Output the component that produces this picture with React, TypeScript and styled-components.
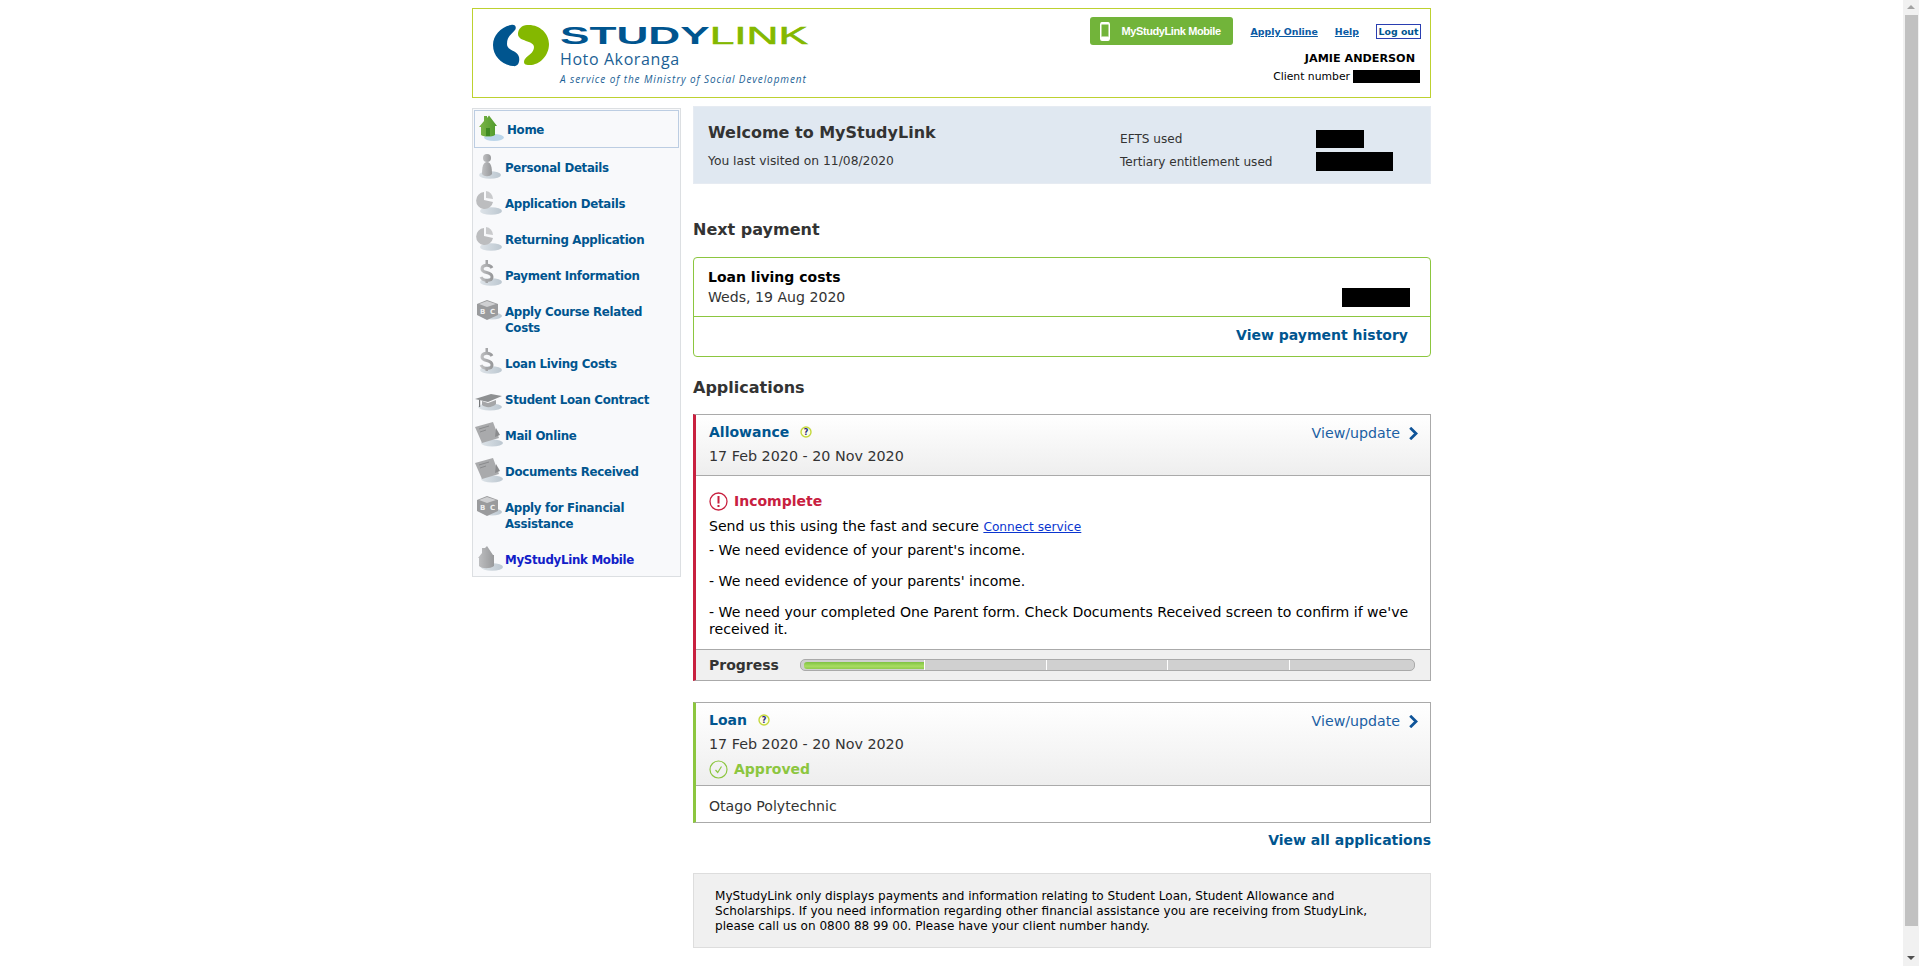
import React from "react";
import styled, { createGlobalStyle } from "styled-components";

const GlobalStyle = createGlobalStyle`
  html, body {
    margin: 0;
    height: 100%;
    overflow: hidden;
  }
  body {
    background: #fff;
    font-family: "DejaVu Sans", Verdana, sans-serif;
    color: #333;
  }
`;

const Viewport = styled.div`
  display: flex;
  height: 966px;
  overflow: hidden;
`;
const PageArea = styled.div`
  flex: 1;
  min-width: 0;
  overflow: hidden;
`;
const Page = styled.div`
  width: 959px;
  margin: 0 auto;
  padding: 8px 0 36px;
`;

/* window scrollbar */
const ScrollTrack = styled.div`
  flex: 0 0 16px;
  background: #f1f1f1;
  display: flex;
  flex-direction: column;
  align-items: center;
  padding: 5px 0 6px;
  box-sizing: border-box;
`;
const ArrowUp = styled.div`
  border-left: 4px solid transparent;
  border-right: 4px solid transparent;
  border-bottom: 4px solid #a3a3a3;
`;
const ArrowDown = styled.div`
  border-left: 4px solid transparent;
  border-right: 4px solid transparent;
  border-top: 4px solid #505050;
`;
const ScrollThumb = styled.div`
  width: 13px;
  height: 911px;
  margin: 6px 0 30px 1px;
  background: #c1c1c1;
`;

/* header */
const Header = styled.header`
  height: 90px;
  box-sizing: border-box;
  border: 1px solid #bdd130;
  display: flex;
  justify-content: space-between;
  background: #fff;
`;
const Brand = styled.div`
  display: flex;
  padding: 15px 0 0 20px;
`;
const BrandText = styled.div`
  margin-left: 10px;
  display: flex;
  flex-direction: column;
`;
const Wordmark = styled.div`
  font-family: "Liberation Sans", Arial, sans-serif;
  font-weight: 700;
  font-size: 23px;
  line-height: 20px;
  height: 20px;
  margin-top: 2px;
  color: #00558f;
  transform: scaleX(1.92);
  transform-origin: left center;
  white-space: nowrap;
`;
const WordmarkGreen = styled.span`
  color: #84b800;
  font-weight: 400;
  -webkit-text-stroke: 0.5px #84b800;
`;
const Subtitle = styled.div`
  font-family: "Open Sans", sans-serif;
  font-size: 16px;
  line-height: 20px;
  margin-top: 3px;
  letter-spacing: 0.6px;
  color: #1c5f95;
`;
const Tagline = styled.div`
  font-family: "Open Sans", sans-serif;
  font-style: italic;
  font-size: 10px;
  line-height: 14px;
  margin-top: 3px;
  letter-spacing: 0.9px;
  color: #1c5f95;
`;
const Account = styled.div`
  display: flex;
  flex-direction: column;
  align-items: flex-end;
  padding: 8px 9px 0 0;
`;
const AccountLinks = styled.div`
  display: flex;
  align-items: center;
`;
const MobileButton = styled.a`
  width: 143px;
  height: 28px;
  box-sizing: border-box;
  background: #72b43a;
  border-radius: 3px;
  display: flex;
  align-items: center;
  padding-left: 10px;
  gap: 11px;
  color: #fff;
  font-family: "Liberation Sans", Arial, sans-serif;
  font-weight: 700;
  font-size: 11px;
  letter-spacing: -0.4px;
  white-space: nowrap;
`;
const TopLink = styled.a`
  margin-left: 17px;
  font-size: 9.4px;
  font-weight: 700;
  color: #0b5aa3;
  text-decoration: underline;
`;
const LogoutLink = styled.a`
  margin-left: 17px;
  height: 15px;
  width: 45px;
  box-sizing: border-box;
  border: 1px solid #2a3eb1;
  font-size: 9.4px;
  line-height: 13px;
  font-weight: 700;
  text-align: center;
  color: #00558f;
`;
const UserName = styled.div`
  font-size: 11.2px;
  font-weight: 700;
  color: #000;
  line-height: 15px;
  margin: 6px 6px 0 0;
`;
const ClientRow = styled.div`
  display: flex;
  align-items: center;
  margin: 3px 1px 0 0;
  font-size: 10.8px;
  line-height: 15px;
  color: #000;
  gap: 3px;
`;
const Redacted = styled.span<{ $w: number; $h: number }>`
  display: inline-block;
  background: #000;
  width: ${(p) => p.$w}px;
  height: ${(p) => p.$h}px;
`;

/* columns */
const Columns = styled.div`
  display: flex;
  align-items: flex-start;
  margin-top: 8px;
`;
const Sidebar = styled.nav`
  width: 209px;
  box-sizing: border-box;
  margin-top: 2px;
  border: 1px solid #dcdfe2;
  background: #f8f9fb;
  padding: 1px 1px 0;
`;
const NavRow = styled.a<{ $active?: boolean; $color?: string }>`
  display: flex;
  align-items: flex-start;
  box-sizing: border-box;
  padding: ${(p) => (p.$active ? "11px 4px 9px" : "12px 4px 8px 3px")};
  border: ${(p) => (p.$active ? "1px solid #bccde2" : "0")};
  font-size: 11.8px;
  letter-spacing: -0.3px;
  font-weight: 700;
  line-height: 16px;
  color: ${(p) => p.$color || "#00558f"};
`;
const NavIconBox = styled.span`
  flex: 0 0 28px;
  height: 26px;
  margin: -7px 0 -3px;
`;
const Main = styled.main`
  width: 738px;
  margin-left: 12px;
`;
const Welcome = styled.section`
  height: 78px;
  box-sizing: border-box;
  background: #e0e8f1;
  border: 1px solid #e6ebf2;
  display: flex;
  padding: 16px 0 0 14px;
`;
const WelcomeLeft = styled.div`
  width: 412px;
`;
const WelcomeTitle = styled.h1`
  margin: 0;
  font-size: 16px;
  line-height: 20px;
  font-weight: 700;
  color: #333;
`;
const WelcomeNote = styled.div`
  margin-top: 11px;
  font-size: 12.3px;
  line-height: 15px;
  color: #333;
`;
const Stats = styled.div`
  display: grid;
  grid-template-columns: 196px auto;
  grid-auto-rows: 23px;
  align-items: center;
  font-size: 12.1px;
  color: #333;
  margin-top: 4px;
`;
const SectionTitle = styled.h2`
  margin: 0;
  font-size: 16px;
  line-height: 20px;
  font-weight: 700;
  color: #333;
`;
const PaymentCard = styled.section`
  margin-top: 17px;
  height: 100px;
  box-sizing: border-box;
  border: 1px solid #8cc63f;
  border-radius: 4px;
  display: flex;
  flex-direction: column;
`;
const PaymentTop = styled.div`
  height: 59px;
  box-sizing: border-box;
  border-bottom: 1px solid #8cc63f;
  padding: 10px 20px 0 14px;
  display: flex;
  justify-content: space-between;
`;
const PaymentName = styled.div`
  font-size: 14px;
  line-height: 18px;
  font-weight: 700;
  color: #000;
`;
const PaymentDate = styled.div`
  font-size: 14.1px;
  line-height: 18px;
  margin-top: 2px;
  color: #333;
`;
const BoldLink = styled.a`
  display: block;
  text-align: right;
  font-size: 14px;
  line-height: 18px;
  font-weight: 700;
  color: #00558f;
`;
const PaymentBottom = styled(BoldLink)`
  padding: 9px 22px 0 0;
`;
const AppCard = styled.section<{ $accent: string }>`
  border: 1px solid #aaa;
  border-left: 3px solid ${(p) => p.$accent};
`;
const AppHead = styled.div<{ $h: number }>`
  height: ${(p) => p.$h}px;
  box-sizing: border-box;
  padding: 8px 12px 0 13px;
  background: linear-gradient(#fff, #eee);
  border-bottom: 1px solid #aaa;
  display: flex;
  justify-content: space-between;
`;
const AppNameRow = styled.div`
  display: flex;
  align-items: center;
  gap: 11px;
  font-size: 14px;
  line-height: 18px;
  font-weight: 700;
  color: #00558f;
`;
const AppDates = styled.div`
  margin-top: 6px;
  font-size: 14.3px;
  line-height: 18px;
  color: #333;
`;
const ViewUpdate = styled.a`
  display: flex;
  align-items: center;
  gap: 9px;
  height: 20px;
  font-size: 14.2px;
  color: #1b5fa3;
`;
const StatusRow = styled.div<{ $color: string; $top?: number }>`
  display: flex;
  align-items: center;
  gap: 6px;
  margin-top: ${(p) => p.$top || 0}px;
  font-size: 14px;
  line-height: 20px;
  font-weight: 700;
  color: ${(p) => p.$color};
`;
const AppBody = styled.div`
  padding: 15px 14px 11px 13px;
  font-size: 14.1px;
  line-height: 17px;
  color: #000;
`;
const PlainBody = styled.div`
  padding: 12px 13px 7px;
  font-size: 14.1px;
  line-height: 17px;
  color: #333;
`;
const ConnectLink = styled.a`
  font-size: 12.2px;
  color: #0a35d0;
  text-decoration: underline;
`;
const BodyLine = styled.p<{ $top: number }>`
  margin: ${(p) => p.$top}px 0 0;
`;
const ProgressRow = styled.div`
  height: 31px;
  box-sizing: border-box;
  background: #f0f0f0;
  border-top: 1px solid #aaa;
  display: flex;
  align-items: center;
  padding: 0 15px 0 13px;
`;
const ProgressLabel = styled.span`
  flex: 0 0 91px;
  font-size: 14px;
  font-weight: 700;
  color: #333;
`;
const ProgressTrack = styled.div`
  flex: 1;
  height: 12px;
  box-sizing: border-box;
  background: #d0d0d0;
  border: 1px solid #aaa;
  border-radius: 5px;
  display: flex;
  padding: 0 4px 0 3px;
`;
const ProgressStep = styled.div`
  flex: 1;
  display: flex;
  align-items: center;
  border-right: 1px solid #fff;
  &:last-child {
    border-right: 0;
  }
`;
const ProgressFill = styled.div`
  width: 100%;
  height: 7px;
  border-radius: 3px 0 0 3px;
  background: linear-gradient(#7fc241, #a9dc62 60%, #8fcb4c);
`;
const Note = styled.div`
  margin-top: 24px;
  height: 75px;
  box-sizing: border-box;
  background: #f0f0f0;
  border: 1px solid #ddd;
  padding: 15px 40px 0 21px;
  font-size: 12.05px;
  line-height: 15px;
  color: #000;
`;
const Spaced = styled.div<{ $top: number }>`
  margin-top: ${(p) => p.$top}px;
`;

const Shadow = ({ cx = 14, cy = 22 }: { cx?: number; cy?: number }) => (
  <ellipse cx={cx} cy={cy} rx="11" ry="3.8" fill="url(#navShadow)" />
);

const icons: Record<string, React.ReactNode> = {
  home: (
    <>
      <ellipse cx="15" cy="22.5" rx="10" ry="3.5" fill="#bcd6ea" />
      <path d="M0 12 L5 6 L5 1 L8 1 L8 3 L10 0.5 L18 11 L16 11 L16 20 C13 22 5 22 2 20 L2 12 Z" fill="url(#navGreen)" />
      <rect x="7" y="13" width="4" height="8" fill="#3f8a22" />
    </>
  ),
  person: (
    <>
      <Shadow cx={13} />
      <circle cx="10" cy="5" r="4" fill="url(#navGrey)" />
      <path d="M5 21 C5 14 6 9 10 9 C14 9 15 14 15 21 C13 24 7 24 5 21 Z" fill="url(#navGrey)" />
    </>
  ),
  pie: (
    <>
      <Shadow />
      <path d="M7 3 L7 11 L16 13 A8.5 8.5 0 1 1 7 3 Z" fill="#bcbdbf" />
      <path d="M9 2 A8 8 0 0 1 16 10 L9 9 Z" fill="#c9cacc" />
    </>
  ),
  dollar: (
    <>
      <Shadow cy={21} />
      <path d="M15 7 C13 3 5 3.500 5 8 C5 13 15 10 15 16 C15 20.500 6 20.500 4 16" fill="none" stroke="url(#navGrey)" strokeWidth="3" />
      <rect x="8.500" y="-1" width="2.500" height="4" fill="#a5a6a8" />
      <rect x="8.500" y="18" width="2.500" height="4" fill="#a5a6a8" />
    </>
  ),
  cube: (
    <>
      <ellipse cx="15" cy="19" rx="10" ry="3.500" fill="url(#navShadow)" />
      <path d="M0 7 L10 3 L21 7 L21 18 L10 23 L0 18 Z" fill="#9a9b9d" />
      <path d="M2 7 L10 4 L19 7 L10 10 Z" fill="#cfd0d2" />
      <text x="3" y="17" fontSize="7" fontWeight="700" fill="#eee" fontFamily="DejaVu Sans">B</text>
      <text x="13" y="17" fontSize="7" fontWeight="700" fill="#eee" fontFamily="DejaVu Sans">C</text>
    </>
  ),
  cap: (
    <>
      <ellipse cx="13" cy="22" rx="12" ry="3.500" fill="url(#navShadow)" />
      <path d="M-2 14 L14 9 L25 11 L11 17 Z" fill="#8e9092" />
      <path d="M5 16 L11 18 L19 15 L19 19 C15 23 9 23 5 20 Z" fill="#a5a6a8" />
      <rect x="2" y="15" width="1.200" height="7" fill="#77797b" />
    </>
  ),
  doc: (
    <>
      <ellipse cx="15" cy="22" rx="11" ry="3.500" fill="url(#navShadow)" />
      <path d="M-2 6 L16 1 L22 17 L5 22 Z" fill="#a9aaac" />
      <path d="M2 8 L12 5 M3 11 L9 9" stroke="#8a8b8d" strokeWidth="1" />
      <path d="M19 7 L23 14 L18 16 Z" fill="#8a8b8d" />
    </>
  ),
  mobilehome: (
    <>
      <Shadow cx={15} />
      <path d="M1 13 L5 8 L5 3 L8 3 L10 1 L16 10 L17 10 L17 21 C13 24 5 24 2 21 L2 13 Z" fill="url(#navGrey)" />
    </>
  ),
};

const NavIcon = ({ name }: { name: string }) => (
  <NavIconBox>
    <svg width="28" height="26" viewBox="0 0 28 26" overflow="visible">
      <defs>
        <linearGradient id="navGrey" x1="0" y1="0" x2="1" y2="0">
          <stop offset="0" stopColor="#bfc0c2" />
          <stop offset="1" stopColor="#98999b" />
        </linearGradient>
        <linearGradient id="navGreen" x1="0" y1="0" x2="1" y2="0">
          <stop offset="0" stopColor="#7db648" />
          <stop offset="1" stopColor="#4f9a2c" />
        </linearGradient>
        <linearGradient id="navShadow" x1="0" y1="0" x2="1" y2="0">
          <stop offset="0" stopColor="#dde3e8" />
          <stop offset="1" stopColor="#bcc7d0" />
        </linearGradient>
      </defs>
      {icons[name]}
    </svg>
  </NavIconBox>
);

const navItems = [
  { icon: "home", label: "Home", active: true },
  { icon: "person", label: "Personal Details" },
  { icon: "pie", label: "Application Details" },
  { icon: "pie", label: "Returning Application" },
  { icon: "dollar", label: "Payment Information" },
  { icon: "cube", label: "Apply Course Related Costs" },
  { icon: "dollar", label: "Loan Living Costs" },
  { icon: "cap", label: "Student Loan Contract" },
  { icon: "doc", label: "Mail Online" },
  { icon: "doc", label: "Documents Received" },
  { icon: "cube", label: "Apply for Financial Assistance" },
  { icon: "mobilehome", label: "MyStudyLink Mobile", color: "#1120c8" },
];

const LogoMark = () => (
  <svg width="57" height="44" viewBox="0 0 57 44">
    <path d="M18 1 C22 0 24 3 22 6 C19 10 14 12 14 20 C14 27 24 26 26 33 C27 38 25 43 20 42 C10 41 0 33 0 21 C0 11 8 3 18 1 Z" fill="#00558f" />
    <path d="M34 1 C46 0 56 9 56 20 C56 32 46 42 35 41 C31 41 30 38 32 35 C35 31 41 29 41 23 C41 16 25 18 25 10 C25 5 29 1 34 1 Z" fill="#84b800" />
  </svg>
);

const PhoneIcon = () => (
  <svg width="10" height="19" viewBox="0 0 10 19">
    <rect x="0.75" y="0.75" width="8.5" height="17.5" rx="1.5" fill="none" stroke="#fff" strokeWidth="1.5" />
    <rect x="1" y="14.5" width="8" height="4" rx="1" fill="#fff" />
    <rect x="1" y="0.5" width="8" height="2" fill="#fff" />
  </svg>
);

const HelpIcon = () => (
  <svg width="12" height="12" viewBox="0 0 12 12">
    <circle cx="6" cy="6" r="5" fill="#fdfde8" stroke="#c4d83c" strokeWidth="1.4" />
    <text x="6" y="9" textAnchor="middle" fontSize="8" fontWeight="700" fill="#2a2a80" fontFamily="DejaVu Sans">?</text>
  </svg>
);

const Chevron = () => (
  <svg width="9" height="13" viewBox="0 0 9 13">
    <path d="M1.2 0.8 L7 6.5 L1.2 12.2" fill="none" stroke="#0f5499" strokeWidth="2.8" />
  </svg>
);

const AlertIcon = () => (
  <svg width="19" height="19" viewBox="0 0 19 19">
    <circle cx="9.5" cy="9.5" r="8.5" fill="none" stroke="#c8203f" strokeWidth="1.3" />
    <rect x="8.5" y="4" width="2" height="7.5" fill="#c8203f" />
    <rect x="8.5" y="13" width="2" height="2" fill="#c8203f" />
  </svg>
);

const CheckIcon = () => (
  <svg width="19" height="19" viewBox="0 0 19 19">
    <circle cx="9.5" cy="9.5" r="8.5" fill="none" stroke="#8cc63f" strokeWidth="1.2" />
    <path d="M6.5 10 L8.7 12.5 L12.5 6.5" fill="none" stroke="#8cc63f" strokeWidth="1.2" />
  </svg>
);

export default function App() {
  return (
    <Viewport>
      <GlobalStyle />
      <PageArea>
        <Page>
          <Header>
            <Brand>
              <LogoMark />
              <BrandText>
                <Wordmark>
                  STUDY<WordmarkGreen>LINK</WordmarkGreen>
                </Wordmark>
                <Subtitle>Hoto Akoranga</Subtitle>
                <Tagline>A service of the Ministry of Social Development</Tagline>
              </BrandText>
            </Brand>
            <Account>
              <AccountLinks>
                <MobileButton>
                  <PhoneIcon />
                  MyStudyLink Mobile
                </MobileButton>
                <TopLink>Apply Online</TopLink>
                <TopLink>Help</TopLink>
                <LogoutLink>Log out</LogoutLink>
              </AccountLinks>
              <UserName>JAMIE ANDERSON</UserName>
              <ClientRow>
                Client number <Redacted $w={67} $h={13} />
              </ClientRow>
            </Account>
          </Header>
          <Columns>
            <Sidebar>
              {navItems.map((item) => (
                <NavRow key={item.label} $active={item.active} $color={item.color}>
                  <NavIcon name={item.icon} />
                  <span>{item.label}</span>
                </NavRow>
              ))}
            </Sidebar>
            <Main>
              <Welcome>
                <WelcomeLeft>
                  <WelcomeTitle>Welcome to MyStudyLink</WelcomeTitle>
                  <WelcomeNote>You last visited on 11/08/2020</WelcomeNote>
                </WelcomeLeft>
                <Stats>
                  <span>EFTS used</span>
                  <Redacted $w={48} $h={18} />
                  <span>Tertiary entitlement used</span>
                  <Redacted $w={77} $h={19} />
                </Stats>
              </Welcome>
              <Spaced $top={36}>
                <SectionTitle>Next payment</SectionTitle>
              </Spaced>
              <PaymentCard>
                <PaymentTop>
                  <div>
                    <PaymentName>Loan living costs</PaymentName>
                    <PaymentDate>Weds, 19 Aug 2020</PaymentDate>
                  </div>
                  <Spaced $top={20}>
                    <Redacted $w={68} $h={19} />
                  </Spaced>
                </PaymentTop>
                <PaymentBottom>View payment history</PaymentBottom>
              </PaymentCard>
              <Spaced $top={21}>
                <SectionTitle>Applications</SectionTitle>
              </Spaced>
              <Spaced $top={16}>
                <AppCard $accent="#c8203f">
                  <AppHead $h={61}>
                    <div>
                      <AppNameRow>
                        Allowance <HelpIcon />
                      </AppNameRow>
                      <AppDates>17 Feb 2020 - 20 Nov 2020</AppDates>
                    </div>
                    <ViewUpdate>
                      View/update <Chevron />
                    </ViewUpdate>
                  </AppHead>
                  <AppBody>
                    <StatusRow $color="#c8203f">
                      <AlertIcon /> Incomplete
                    </StatusRow>
                    <BodyLine $top={7}>
                      Send us this using the fast and secure <ConnectLink>Connect service</ConnectLink>
                    </BodyLine>
                    <BodyLine $top={6}>- We need evidence of your parent's income.</BodyLine>
                    <BodyLine $top={14}>- We need evidence of your parents' income.</BodyLine>
                    <BodyLine $top={14}>
                      - We need your completed One Parent form. Check Documents Received screen to confirm if we've
                      received it.
                    </BodyLine>
                  </AppBody>
                  <ProgressRow>
                    <ProgressLabel>Progress</ProgressLabel>
                    <ProgressTrack>
                      <ProgressStep>
                        <ProgressFill />
                      </ProgressStep>
                      <ProgressStep />
                      <ProgressStep />
                      <ProgressStep />
                      <ProgressStep />
                    </ProgressTrack>
                  </ProgressRow>
                </AppCard>
              </Spaced>
              <Spaced $top={21}>
                <AppCard $accent="#8cc63f">
                  <AppHead $h={83}>
                    <div>
                      <AppNameRow>
                        Loan <HelpIcon />
                      </AppNameRow>
                      <AppDates>17 Feb 2020 - 20 Nov 2020</AppDates>
                      <StatusRow $color="#8cc63f" $top={6}>
                        <CheckIcon /> Approved
                      </StatusRow>
                    </div>
                    <ViewUpdate>
                      View/update <Chevron />
                    </ViewUpdate>
                  </AppHead>
                  <PlainBody>Otago Polytechnic</PlainBody>
                </AppCard>
              </Spaced>
              <Spaced $top={8}>
                <BoldLink>View all applications</BoldLink>
              </Spaced>
              <Note>
                MyStudyLink only displays payments and information relating to Student Loan, Student Allowance and
                Scholarships. If you need information regarding other financial assistance you are receiving from
                StudyLink, please call us on 0800 88 99 00. Please have your client number handy.
              </Note>
            </Main>
          </Columns>
        </Page>
      </PageArea>
      <ScrollTrack>
        <ArrowUp />
        <ScrollThumb />
        <ArrowDown />
      </ScrollTrack>
    </Viewport>
  );
}
